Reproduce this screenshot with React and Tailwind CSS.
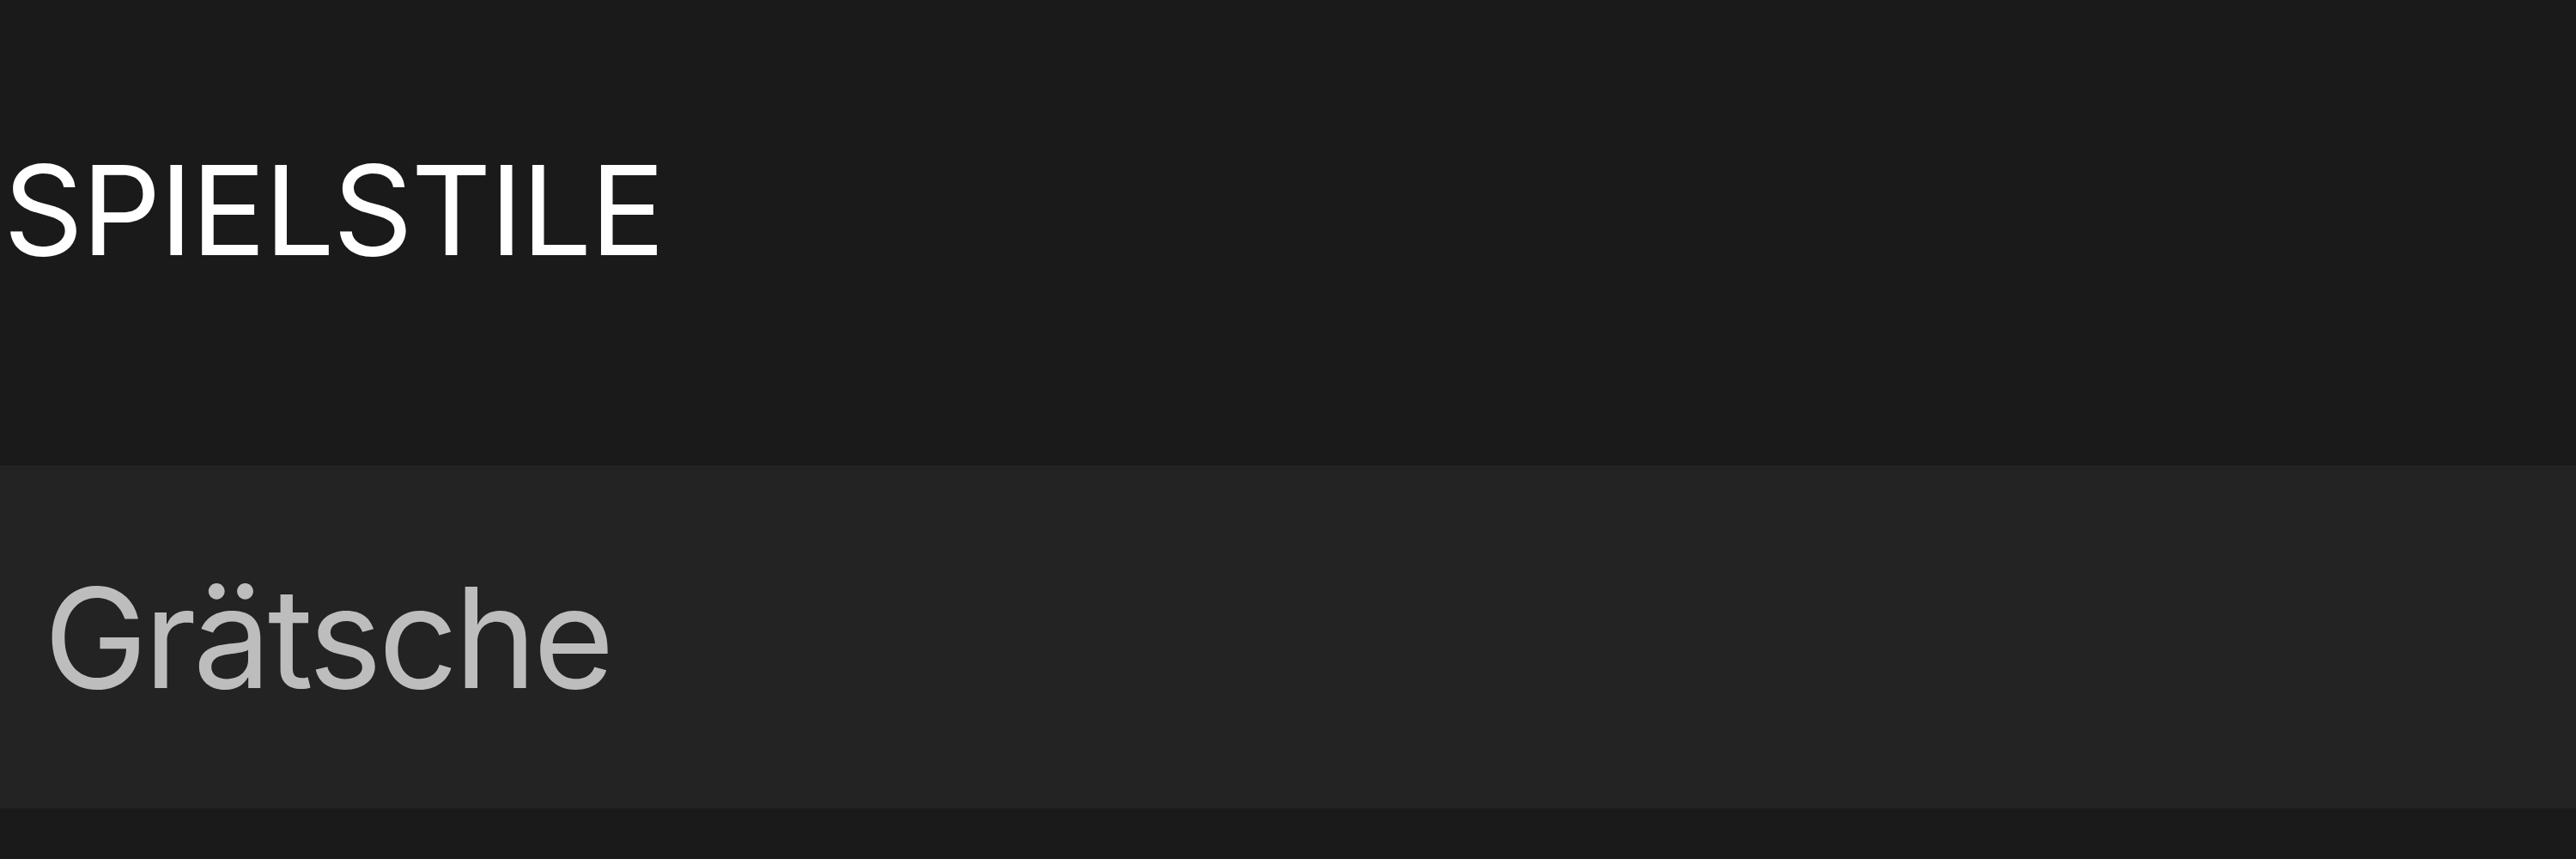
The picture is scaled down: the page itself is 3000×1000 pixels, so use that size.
import React from "react";

/**
 * Settings list: section header with a single option row
 */
export default function App() {
  const items = ["Grätsche"];

  return (
    <div
      className="w-[3000px] h-[1000px] bg-[#1a1a1a] overflow-hidden"
      style={{ fontFamily: "Inter, 'Noto Sans', sans-serif" }}
    >
      {/* Section header */}
      <div className="h-[542px] pl-[4px] pt-[172px]">
        <h2 className="text-[145px] leading-none font-normal text-white tracking-[-2px]">
          SPIELSTILE
        </h2>
      </div>

      {/* Rows */}
      <div>
        {items.map((label) => (
          <div
            key={label}
            className="h-[399px] bg-[#232323] flex items-center pl-[51px]"
          >
            <span className="text-[162px] leading-none text-[#bdbdbd] tracking-[-4px]">{label}</span>
          </div>
        ))}
      </div>
    </div>
  );
}
